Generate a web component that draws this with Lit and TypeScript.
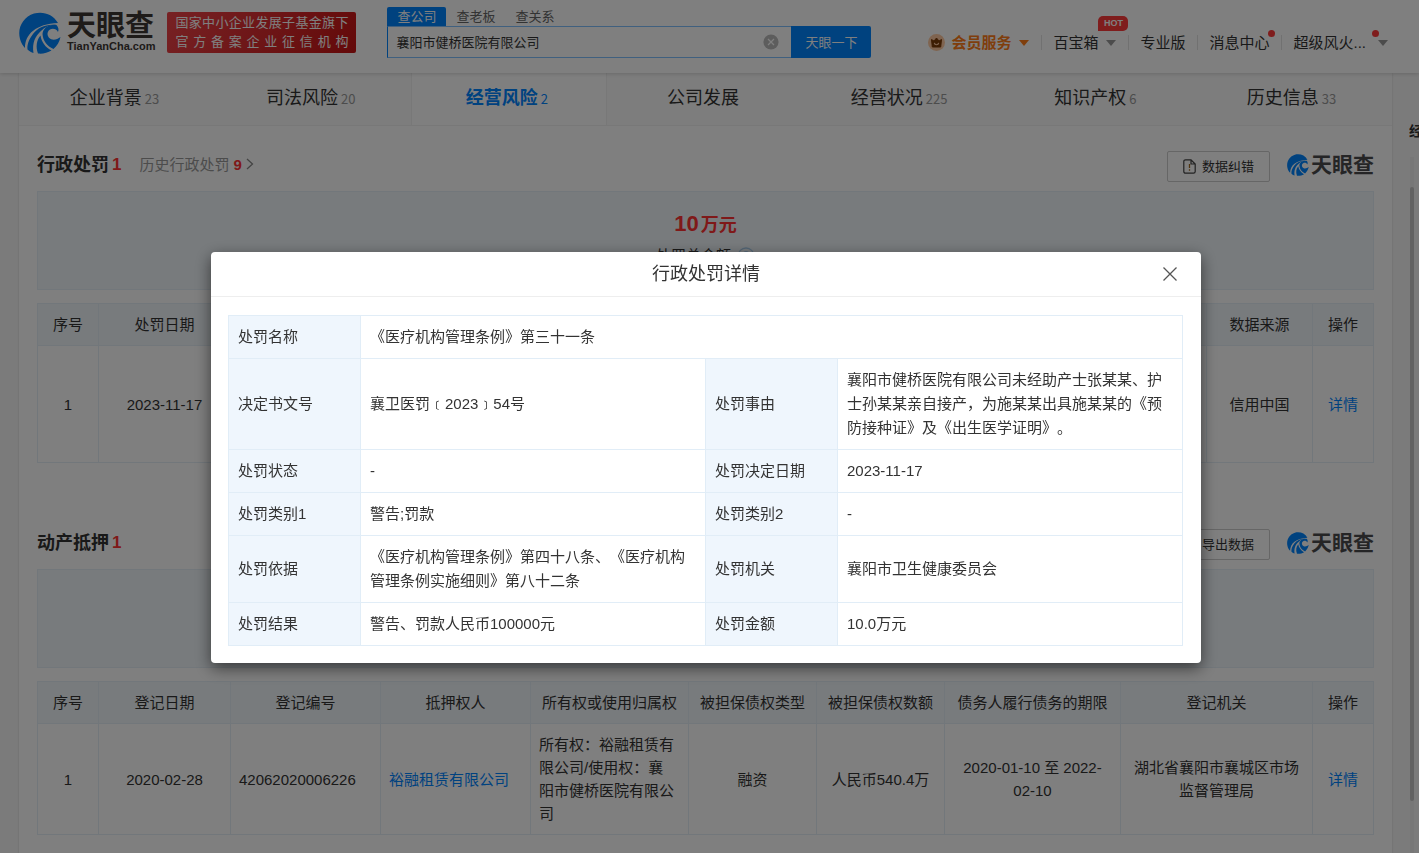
import { LitElement, html, css, svg, nothing } from "lit";
import { customElement, property } from "lit/decorators.js";

const baseText = css`
  :host {
    font-family: "Liberation Sans", "Noto Sans CJK SC", sans-serif;
    font-size: 15px;
    line-height: 23px;
    color: #333;
    text-spacing-trim: space-all;
  }
  *,
  *::before,
  *::after {
    box-sizing: border-box;
  }
  a {
    color: inherit;
    text-decoration: none;
  }
  button,
  input {
    font: inherit;
    color: inherit;
    margin: 0;
    padding: 0;
    border: 0;
    background: none;
  }
  h2,
  p {
    margin: 0;
  }
  svg {
    display: block;
  }
`;

const swirl = svg`
  <path d="M39 11 C34 2 24 -1 15 1.500 C4 5 -2 16 1 27 C2 31 4 34 6 36 C6 22 17 12 39 11 Z" fill="#0084ff"/>
  <path d="M37.500 13 C28 11.500 19 15 14 22 C9.500 28 8 33 8.500 37.500 C10.500 39.500 12.500 40.500 14.500 41 C13 31 16 24 22.500 18.500 C26 15 31 12.500 37.500 13 Z" fill="#0084ff"/>
  <path d="M37.500 13 C39.500 15 40 18 39 20 C37.500 17 34 16 31 17.500 C27 20 28 26 33 27.500 C36 28 39 27 41.500 25 C40.500 30 38 34 34.500 37 C28 34 24 29 23.500 22 C24 16 30 12 37.500 13 Z" fill="#0084ff"/>
  <path d="M21.500 23.500 C22.500 30 26.500 35.500 32.500 38.500 C28.500 41 23.500 42 19 41.500 C16.500 35 17.500 28 21.500 23.500 Z" fill="#0084ff"/>`;

@customElement("brand-logo")
export class BrandLogo extends LitElement {
  @property({ type: Boolean, reflect: true }) small = false;

  static styles = [
    baseText,
    css`
      :host {
        display: flex;
        align-items: center;
        gap: 6px;
      }
      :host([small]) {
        gap: 2px;
      }
      .mark {
        width: 42px;
        height: 42px;
      }
      .words {
        display: flex;
        flex-direction: column;
      }
      .name {
        font-size: 29px;
        line-height: 27px;
        font-weight: 700;
        color: #3c3633;
      }
      .domain {
        font-size: 11px;
        line-height: 13px;
        font-weight: 700;
        color: #3c3633;
      }
      :host([small]) .mark {
        width: 22px;
        height: 22px;
      }
      :host([small]) .name {
        font-size: 21px;
        line-height: 22px;
        color: #4a4a4d;
      }
    `,
  ];

  render() {
    return html`<svg class="mark" viewBox="0 0 42 42" aria-hidden="true">${swirl}</svg>
      <div class="words">
        <span class="name">天眼查</span>
        ${this.small ? nothing : html`<span class="domain">TianYanCha.com</span>`}
      </div>`;
  }
}

@customElement("site-header")
export class SiteHeader extends LitElement {
  static styles = [
    baseText,
    css`
      :host {
        display: flex;
        align-items: flex-start;
        height: 73px;
        padding: 0 31px 0 19px;
        background: #fff;
        box-shadow: 0 1px 4px rgba(0, 0, 0, 0.16);
        position: relative;
        z-index: 1;
      }
      brand-logo {
        margin-top: 12px;
      }
      .slogan {
        width: 189px;
        height: 41px;
        margin: 12px 31px 0 12px;
        padding: 1px 8px;
        border-radius: 2px;
        background: linear-gradient(120deg, #ee4348, #c81414);
        color: #fff;
        font-size: 13px;
        line-height: 19px;
        white-space: nowrap;
      }
      .slogan span {
        display: block;
        text-align-last: justify;
      }
      .search {
        display: grid;
        grid-template-columns: 404px 80px;
        margin-top: 7px;
        font-size: 13px;
        line-height: 19px;
      }
      .kinds {
        grid-column: 1 / -1;
        display: flex;
        color: #666;
      }
      .kinds button {
        height: 19px;
        padding: 0 10px;
      }
      .kinds .on {
        background: #0084ff;
        color: #fff;
        border-radius: 2px 2px 0 0;
      }
      .box {
        display: flex;
        align-items: center;
        height: 32px;
        padding: 0 12px 0 8px;
        border: 1px solid #80c0ff;
        border-left-color: #0084ff;
        border-right: 0;
      }
      .box input {
        flex: 1;
        min-width: 0;
        outline: 0;
      }
      .clear svg {
        width: 16px;
        height: 16px;
      }
      .go {
        background: #0084ff;
        color: #fff;
        border-radius: 0 2px 2px 0;
      }
      nav {
        display: flex;
        align-items: center;
        margin: 31px 0 0 auto;
        white-space: nowrap;
      }
      .item {
        display: flex;
        align-items: center;
        position: relative;
      }
      .item + .item::before {
        content: "";
        width: 1px;
        height: 15px;
        margin: 0 11px 0 12px;
        background: #e2e2e2;
      }
      .vip {
        color: #ff7d18;
        font-weight: 700;
        gap: 6px;
      }
      .crown {
        width: 17px;
        height: 17px;
      }
      .caret {
        width: 0;
        border: 5px solid transparent;
        border-top: 6px solid #999;
        border-bottom: 0;
        margin-left: 8px;
      }
      .vip .caret {
        border-top-color: #ff7d18;
        margin-left: 2px;
      }
      .user .caret {
        margin-left: 12px;
      }
      .hot {
        position: absolute;
        right: -12px;
        top: -15px;
        width: 30px;
        height: 15px;
        border-radius: 5px 5px 5px 0;
        background: #ff3a3a;
        color: #fff;
        font-size: 9px;
        font-weight: 700;
        line-height: 15px;
        text-align: center;
      }
      .dot {
        position: absolute;
        right: -6px;
        top: -1px;
        width: 7px;
        height: 7px;
        border-radius: 50%;
        background: #ff3a3a;
      }
      .user .dot {
        right: 9px;
      }
    `,
  ];

  render() {
    return html`
      <brand-logo></brand-logo>
      <p class="slogan"><span>国家中小企业发展子基金旗下</span><span>官方备案企业征信机构</span></p>
      <form class="search" @submit=${(e: Event) => e.preventDefault()}>
        <div class="kinds">
          <button type="button" class="on">查公司</button>
          <button type="button">查老板</button>
          <button type="button">查关系</button>
        </div>
        <div class="box">
          <input type="text" aria-label="查公司" .value=${"襄阳市健桥医院有限公司"} />
          <button type="reset" class="clear" aria-label="清除">
            <svg viewBox="0 0 16 16">
              <circle cx="8" cy="8" r="7.6" fill="#bbb" />
              <path d="M5 5l6 6M11 5l-6 6" stroke="#fff" stroke-width="1.2" />
            </svg>
          </button>
        </div>
        <button class="go" type="submit">天眼一下</button>
      </form>
      <nav>
        <a class="item vip" href="#">
          <svg class="crown" viewBox="0 0 17 17" aria-hidden="true">
            <circle cx="8.500" cy="8.500" r="8.500" fill="#ffc9a0" />
            <path d="M3.500 5.500L6 7l2.500-3L11 7l2.500-1.500-.8 7.500H4.300z" fill="#7b3a06" stroke="#7b3a06" stroke-linejoin="round" />
            <path d="M6.300 8.800c.4 2.600 4 2.600 4.400 0" fill="none" stroke="#ffc9a0" stroke-width="1.200" />
          </svg>
          会员服务<i class="caret"></i>
        </a>
        <a class="item" href="#">百宝箱<i class="caret"></i><span class="hot">HOT</span></a>
        <a class="item" href="#">专业版</a>
        <a class="item" href="#">消息中心<i class="dot"></i></a>
        <a class="item user" href="#">超级风火...<i class="caret"></i><i class="dot"></i></a>
      </nav>
    `;
  }
}

@customElement("section-head")
export class SectionHead extends LitElement {
  @property() heading = "";
  @property({ type: Number }) count = 0;
  @property() action = "";
  @property() history = "";
  @property({ type: Number }) historyCount = 0;

  static styles = [
    baseText,
    css`
      :host {
        display: flex;
        align-items: center;
        height: 30px;
        margin-bottom: 10px;
      }
      h2 {
        display: flex;
        gap: 3px;
        font-size: 18px;
        line-height: 26px;
        font-weight: 700;
        padding-bottom: 3px;
      }
      .num {
        color: #f33;
        font-weight: 700;
      }
      h2 .num {
        font-size: 17px;
      }
      .past {
        display: flex;
        align-items: center;
        gap: 4px;
        margin-left: 18px;
        padding-bottom: 4px;
        color: #999;
      }
      .past svg {
        width: 8px;
        height: 14px;
      }
      .act {
        display: flex;
        align-items: center;
        justify-content: center;
        gap: 6px;
        width: 103px;
        height: 31px;
        margin: 0 17px 0 auto;
        border: 1px solid #ccc;
        border-radius: 2px;
        font-size: 13px;
        color: #333;
      }
      .act svg {
        width: 13px;
        height: 15px;
      }
      brand-logo {
        margin-bottom: 3px;
      }
    `,
  ];

  render() {
    return html`
      <h2><span>${this.heading}</span><span class="num">${this.count}</span></h2>
      ${this.history
        ? html`<a class="past" href="#">${this.history} <span class="num">${this.historyCount}</span
            ><svg viewBox="0 0 8 14" aria-hidden="true"><path d="M1 2l5.500 5L1 12" fill="none" stroke="#888" stroke-width="1.300" /></svg></a>`
        : nothing}
      <button class="act" type="button">
        <svg viewBox="0 0 13 15" aria-hidden="true">
          <path d="M2.500 .8H8L12.200 5v7.500a1.700 1.700 0 0 1-1.700 1.700h-8A1.700 1.700 0 0 1 .8 12.500v-10A1.700 1.700 0 0 1 2.500.8zM8 1v4h4" fill="none" stroke="#444" stroke-width="1.200" />
          <path d="M6.500 5v4M6.500 10.300v1.400" stroke="#a06a20" stroke-width="1.300" />
        </svg>
        ${this.action}
      </button>
      <brand-logo small></brand-logo>
    `;
  }
}

interface DetailRow {
  cells: [string, string][];
}

const detailRows: DetailRow[] = [
  { cells: [["处罚名称", "《医疗机构管理条例》第三十一条"]] },
  {
    cells: [
      ["决定书文号", "襄卫医罚﹝2023﹞54号"],
      ["处罚事由", "襄阳市健桥医院有限公司未经助产士张某某、护士孙某某亲自接产，为施某某出具施某某的《预防接种证》及《出生医学证明》。"],
    ],
  },
  { cells: [["处罚状态", "-"], ["处罚决定日期", "2023-11-17"]] },
  { cells: [["处罚类别1", "警告;罚款"], ["处罚类别2", "-"]] },
  {
    cells: [
      ["处罚依据", "《医疗机构管理条例》第四十八条、《医疗机构管理条例实施细则》第八十二条"],
      ["处罚机关", "襄阳市卫生健康委员会"],
    ],
  },
  { cells: [["处罚结果", "警告、罚款人民币100000元"], ["处罚金额", "10.0万元"]] },
];

@customElement("detail-dialog")
export class DetailDialog extends LitElement {
  static styles = [
    baseText,
    css`
      :host {
        position: fixed;
        inset: 0;
        z-index: 10;
        display: flex;
        justify-content: center;
        align-items: flex-start;
        padding: 252px 7px 0 0;
        background: rgba(0, 0, 0, 0.5);
      }
      .panel {
        width: min(990px, 94%);
        background: #fff;
        border-radius: 4px;
        box-shadow: 0 5px 16px rgba(0, 0, 0, 0.55);
      }
      header {
        display: grid;
        grid-template-columns: 1fr auto 1fr;
        align-items: center;
        height: 45px;
        padding: 0 22px;
        border-bottom: 1px solid #eee;
      }
      h2 {
        grid-column: 2;
        font-size: 18px;
        line-height: 26px;
        font-weight: 400;
      }
      .close {
        justify-self: end;
      }
      .close svg {
        width: 18px;
        height: 18px;
      }
      .body {
        padding: 18px 18px 17px 17px;
      }
      table {
        width: 100%;
        table-layout: fixed;
        border-collapse: collapse;
        line-height: 24px;
      }
      th,
      td {
        padding: 9px;
        border: 1px solid #e1edf7;
        text-align: left;
        font-weight: 400;
      }
      th {
        background: #eff6fd;
      }
      .label {
        width: 132px;
      }
    `,
  ];

  render() {
    return html`
      <div class="panel" role="dialog" aria-modal="true" aria-labelledby="title">
        <header>
          <h2 id="title">行政处罚详情</h2>
          <button class="close" type="button" aria-label="关闭">
            <svg viewBox="0 0 18 18"><path d="M2.500 2.500l13 13M15.500 2.500l-13 13" stroke="#555" stroke-width="1.300" /></svg>
          </button>
        </header>
        <div class="body">
          <table>
            <colgroup>
              <col class="label" /><col /><col class="label" /><col />
            </colgroup>
            <tbody>
              ${detailRows.map(
                (row) => html`<tr>
                  ${row.cells.map(
                    ([k, v]) => html`<th scope="row">${k}</th>
                      <td colspan=${row.cells.length === 1 ? 3 : 1}>${v}</td>`,
                  )}
                </tr>`,
              )}
            </tbody>
          </table>
        </div>
      </div>
    `;
  }
}

const tabs: { name: string; count?: number; on?: boolean }[] = [
  { name: "企业背景", count: 23 },
  { name: "司法风险", count: 20 },
  { name: "经营风险", count: 2, on: true },
  { name: "公司发展" },
  { name: "经营状况", count: 225 },
  { name: "知识产权", count: 6 },
  { name: "历史信息", count: 33 },
];

@customElement("app-root")
export class AppRoot extends LitElement {
  static styles = [
    baseText,
    css`
      :host {
        display: block;
        height: 100vh;
        overflow: hidden;
        background: #f7f7f7;
      }
      .page {
        display: flex;
        gap: 17px;
        padding-left: 19px;
      }
      main {
        flex: 1;
        min-width: 0;
        background: #fff;
        box-shadow: 0 0 2px rgba(0, 0, 0, 0.16);
      }
      .tabs {
        display: grid;
        grid-template-columns: repeat(7, 1fr);
        height: 53px;
        background: #fafafa;
        border-bottom: 1px solid #f0f0f0;
      }
      .tab {
        display: flex;
        align-items: center;
        justify-content: center;
        gap: 3px;
        padding: 0 5px 2px 0;
        font-size: 18px;
      }
      .tab small {
        font-family: "Noto Sans CJK SC", sans-serif;
        font-size: 13px;
        font-weight: 400;
        color: #999;
      }
      .tab.on {
        background: #fff;
        border: solid #f0f0f0;
        border-width: 0 1px;
        color: #0084ff;
        font-weight: 700;
      }
      .tab.on small {
        color: #0084ff;
      }
      section {
        padding: 25px 18px 0;
      }
      .next {
        padding-top: 66px;
        padding-bottom: 18px;
        border-bottom: 1px solid #eee;
      }
      .summary {
        height: 99px;
        margin-bottom: 13px;
        padding-top: 18px;
        background: #f0f6fa;
        border: 1px solid #e4eef6;
        text-align: center;
      }
      .amount {
        font-size: 18px;
        line-height: 28px;
        font-weight: 700;
        color: #f33;
      }
      .amount b {
        font-size: 22px;
        margin-right: 2px;
      }
      .caption {
        display: flex;
        align-items: center;
        justify-content: center;
        gap: 6px;
        padding-top: 5px;
      }
      .caption svg {
        width: 18px;
        height: 18px;
      }
      table {
        width: 100%;
        table-layout: fixed;
        border-collapse: collapse;
      }
      th,
      td {
        padding: 9px 8px;
        border: 1px solid #e4eef6;
        font-weight: 400;
        text-align: center;
      }
      th {
        background: #f0f6fa;
        white-space: nowrap;
      }
      td a {
        color: #0084ff;
      }
      .left {
        text-align: left;
        padding-right: 11px;
      }
      .tall td {
        height: 117px;
      }
      .w61 {
        width: 61px;
      }
      .w106 {
        width: 106px;
      }
      .w128 {
        width: 128px;
      }
      .w132 {
        width: 132px;
      }
      .w150 {
        width: 150px;
      }
      .w158 {
        width: 158px;
      }
      .w176 {
        width: 176px;
      }
      aside {
        width: 10px;
        height: 780px;
        display: flex;
        flex-direction: column;
        overflow: hidden;
        font-size: 14px;
        font-weight: 700;
        white-space: nowrap;
      }
      aside span {
        padding: 47px 0 14px;
      }
      .track {
        flex: 1;
        width: 4px;
        margin-left: 1px;
        padding-top: 30px;
        background: #eee;
      }
      .thumb {
        height: 614px;
        border-radius: 2px;
        background: #c4c4c4;
      }
    `,
  ];

  render() {
    return html`
      <site-header></site-header>
      <div class="page">
        <main>
          <nav class="tabs">
            ${tabs.map(
              (t) => html`<a href="#" class="tab ${t.on ? "on" : ""}">${t.name}${t.count ? html`<small>${t.count}</small>` : nothing}</a>`,
            )}
          </nav>
          <section>
            <section-head heading="行政处罚" count="1" history="历史行政处罚" .historyCount=${9} action="数据纠错"></section-head>
            <div class="summary">
              <p class="amount"><b>10</b>万元</p>
              <p class="caption">
                处罚总金额
                <svg viewBox="0 0 18 18" aria-hidden="true">
                  <circle cx="9" cy="9" r="8" fill="none" stroke="#a9cdec" stroke-width="1.300" />
                  <path d="M6.500 7.200c0-3.400 5-3.400 5 0 0 1.800-2.500 1.800-2.500 4M9 12.500V14" fill="none" stroke="#a9cdec" stroke-width="1.300" />
                </svg>
              </p>
            </div>
            <table>
              <colgroup>
                <col class="w61" /><col class="w132" /><col /><col class="w106" /><col class="w61" />
              </colgroup>
              <thead>
                <tr><th>序号</th><th>处罚日期</th><th></th><th>数据来源</th><th>操作</th></tr>
              </thead>
              <tbody>
                <tr class="tall"><td>1</td><td>2023-11-17</td><td></td><td>信用中国</td><td><a href="#">详情</a></td></tr>
              </tbody>
            </table>
          </section>
          <section class="next">
            <section-head heading="动产抵押" count="1" action="导出数据"></section-head>
            <div class="summary"></div>
            <table>
              <colgroup>
                <col class="w61" /><col class="w132" /><col class="w150" /><col class="w150" /><col class="w158" />
                <col class="w128" /><col class="w128" /><col class="w176" /><col /><col class="w61" />
              </colgroup>
              <thead>
                <tr>
                  <th>序号</th><th>登记日期</th><th>登记编号</th><th>抵押权人</th><th>所有权或使用归属权</th>
                  <th>被担保债权类型</th><th>被担保债权数额</th><th>债务人履行债务的期限</th><th>登记机关</th><th>操作</th>
                </tr>
              </thead>
              <tbody>
                <tr>
                  <td>1</td>
                  <td>2020-02-28</td>
                  <td class="left">42062020006226</td>
                  <td class="left"><a href="#">裕融租赁有限公司</a></td>
                  <td class="left">所有权：裕融租赁有限公司/使用权：襄阳市健桥医院有限公司</td>
                  <td>融资</td>
                  <td>人民币540.4万</td>
                  <td>2020-01-10 至 2022-02-10</td>
                  <td>湖北省襄阳市襄城区市场监督管理局</td>
                  <td><a href="#">详情</a></td>
                </tr>
              </tbody>
            </table>
          </section>
        </main>
        <aside>
          <span>经营风险</span>
          <div class="track"><div class="thumb"></div></div>
        </aside>
      </div>
      <detail-dialog></detail-dialog>
    `;
  }
}
